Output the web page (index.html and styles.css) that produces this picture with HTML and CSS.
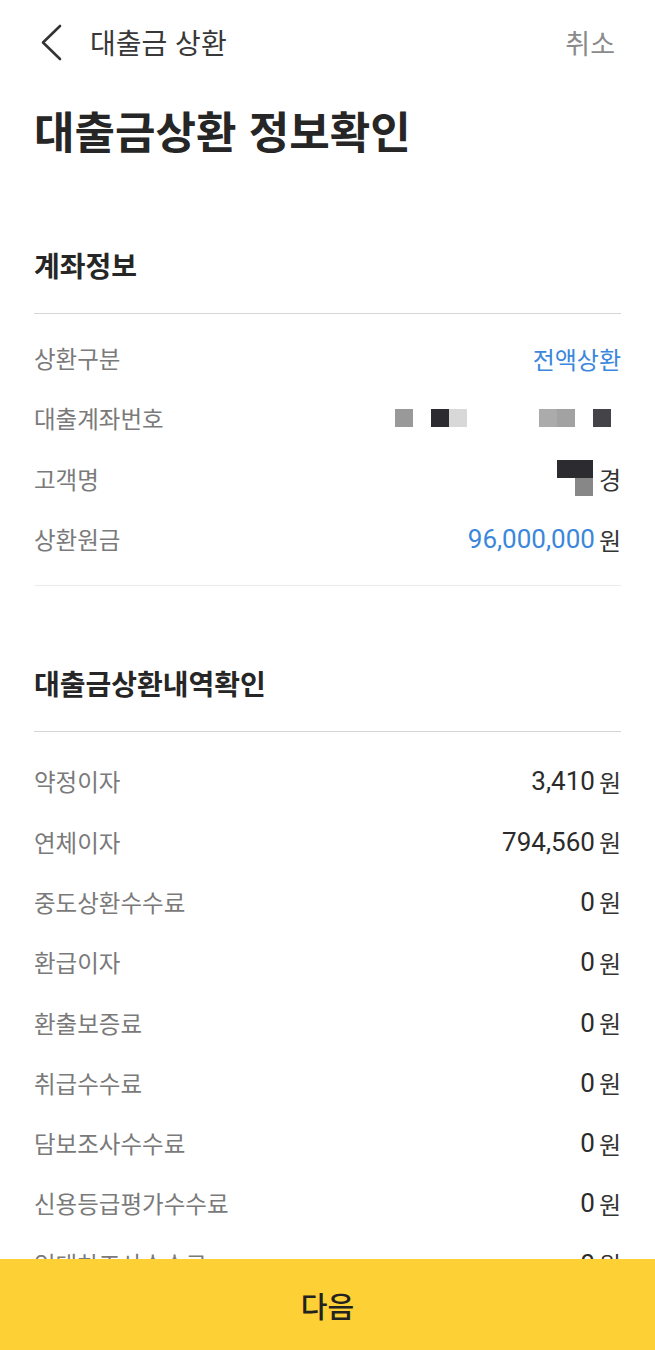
FILE: index.html
```html
<!DOCTYPE html>
<html lang="ko">

<head>
    <meta charset="UTF-8">
    <meta name="viewport" content="width=device-width, initial-scale=1.0">
    <title>대출금 상환</title>
    <link rel="stylesheet" href="styles.css">
</head>

<body>
    <header class="topbar">
        <svg class="back" width="24" height="40" viewBox="0 0 24 40">
            <polyline points="20,3 3,19.5 20,36" fill="none" stroke="#333" stroke-width="2.6" stroke-linecap="round" stroke-linejoin="round"/>
        </svg>
        <span class="topbar-title">대출금 상환</span>
        <span class="cancel">취소</span>
    </header>

    <main class="container">
        <h1 class="page-title">대출금상환 정보확인</h1>

        <!-- 계좌정보 -->
        <section class="info first">
            <h2>계좌정보</h2>
            <ul class="rows">
                <li><span class="label">상환구분</span><span class="value blue">전액상환</span></li>
                <li>
                    <span class="label">대출계좌번호</span>
                    <span class="mask account">
                        <i class="c1"></i><i></i><i class="c2"></i><i class="c3"></i><i></i><i></i><i></i><i></i><i class="c4"></i><i class="c5"></i><i></i><i class="c6"></i>
                    </span>
                </li>
                <li>
                    <span class="label">고객명</span>
                    <span class="value"><span class="mask name"><i class="c2"></i><i class="c2"></i><i></i><i class="c7"></i></span>경</span>
                </li>
                <li><span class="label">상환원금</span><span class="value"><span class="num blue">96,000,000</span><span class="won">원</span></span></li>
            </ul>
        </section>

        <!-- 대출금상환내역확인 -->
        <section class="info second">
            <h2>대출금상환내역확인</h2>
            <ul class="rows">
                <li><span class="label">약정이자</span><span class="value"><span class="num">3,410</span><span class="won">원</span></span></li>
                <li><span class="label">연체이자</span><span class="value"><span class="num">794,560</span><span class="won">원</span></span></li>
                <li><span class="label">중도상환수수료</span><span class="value"><span class="num">0</span><span class="won">원</span></span></li>
                <li><span class="label">환급이자</span><span class="value"><span class="num">0</span><span class="won">원</span></span></li>
                <li><span class="label">환출보증료</span><span class="value"><span class="num">0</span><span class="won">원</span></span></li>
                <li><span class="label">취급수수료</span><span class="value"><span class="num">0</span><span class="won">원</span></span></li>
                <li><span class="label">담보조사수수료</span><span class="value"><span class="num">0</span><span class="won">원</span></span></li>
                <li><span class="label">신용등급평가수수료</span><span class="value"><span class="num">0</span><span class="won">원</span></span></li>
                <li><span class="label">임대차조사수수료</span><span class="value"><span class="num">0</span><span class="won">원</span></span></li>
                <li><span class="label">기타수수료</span><span class="value"><span class="num">0</span><span class="won">원</span></span></li>
            </ul>
        </section>
    </main>

    <button class="next-btn">다음</button>
</body>

</html>
```

FILE: styles.css
```css
/* 대출금 상환 - 정보확인 */

body {
    margin: 0;
    padding: 0;
    background: #fff;
    color: #2b2b2b;
    font-family: Roboto, "Noto Sans CJK KR", sans-serif;
}

.topbar {
    display: flex;
    align-items: center;
    height: 84px;
    padding: 0 40px;
}

.back {
    display: block;
    margin-top: 1px;
}

.topbar-title {
    margin-left: 26px;
    font-family: "Noto Sans CJK KR", sans-serif;
    font-size: 28px;
    color: #383838;
    flex: 1;
}

.cancel {
    font-family: "Noto Sans CJK KR", sans-serif;
    font-size: 27px;
    color: #8a8a8a;
}

.container {
    padding: 0 34px 120px;
}

.page-title {
    margin: 14px 0 0;
    font-family: "Noto Sans CJK KR", sans-serif;
    font-size: 44px;
    line-height: 64px;
    font-weight: 700;
    color: #262626;
}

.info {
    padding-top: 77px;
}

.info.first {
    padding-top: 83px;
    padding-bottom: 16px;
    border-bottom: 1px solid #ececec;
}

.info h2 {
    margin: 0;
    font-family: "Noto Sans CJK KR", sans-serif;
    font-size: 28px;
    line-height: 40px;
    font-weight: 700;
    color: #262626;
    padding-bottom: 28px;
    border-bottom: 1px solid #d3d6d8;
}

.rows {
    list-style: none;
    margin: 0;
    padding: 14px 0 0;
}

.second .rows {
    padding-top: 19px;
}

.rows li {
    display: flex;
    justify-content: space-between;
    align-items: center;
    height: 60.3px;
}

.label {
    font-family: "Noto Sans CJK KR", sans-serif;
    font-size: 23.5px;
    color: #7a7a7a;
}

.value {
    display: flex;
    align-items: center;
    font-family: "Noto Sans CJK KR", sans-serif;
    font-size: 24px;
    color: #333;
}

.num {
    font-family: Roboto, sans-serif;
    font-size: 26px;
    color: #2b2b2b;
    margin-right: 4px;
}

.blue,
.num.blue {
    color: #3b87dc;
}

.won {
    font-size: 24px;
}

/* 마스킹 블록 */
.mask {
    display: inline-grid;
    grid-auto-flow: column;
    grid-auto-columns: 18px;
    grid-template-rows: 18px;
}

.mask i {
    display: block;
}

.mask.account {
    margin-right: 10px;
}

.mask.name {
    grid-auto-flow: row;
    grid-template-columns: 18px 18px;
    grid-template-rows: 18px 18px;
    margin-right: 6px;
    margin-top: -2px;
}

.c1 { background: #999; }
.c2 { background: #2b2b30; }
.c3 { background: #d8d8d8; }
.c4 { background: #ababab; }
.c5 { background: #a2a2a2; }
.c6 { background: #444448; }
.c7 { background: #878787; }

.next-btn {
    position: fixed;
    left: 0;
    right: 0;
    bottom: 0;
    height: 91px;
    width: 100%;
    border: 0;
    background: #fdd035;
    font-family: "Noto Sans CJK KR", sans-serif;
    font-size: 29px;
    font-weight: 500;
    color: #222;
    cursor: pointer;
}
```
